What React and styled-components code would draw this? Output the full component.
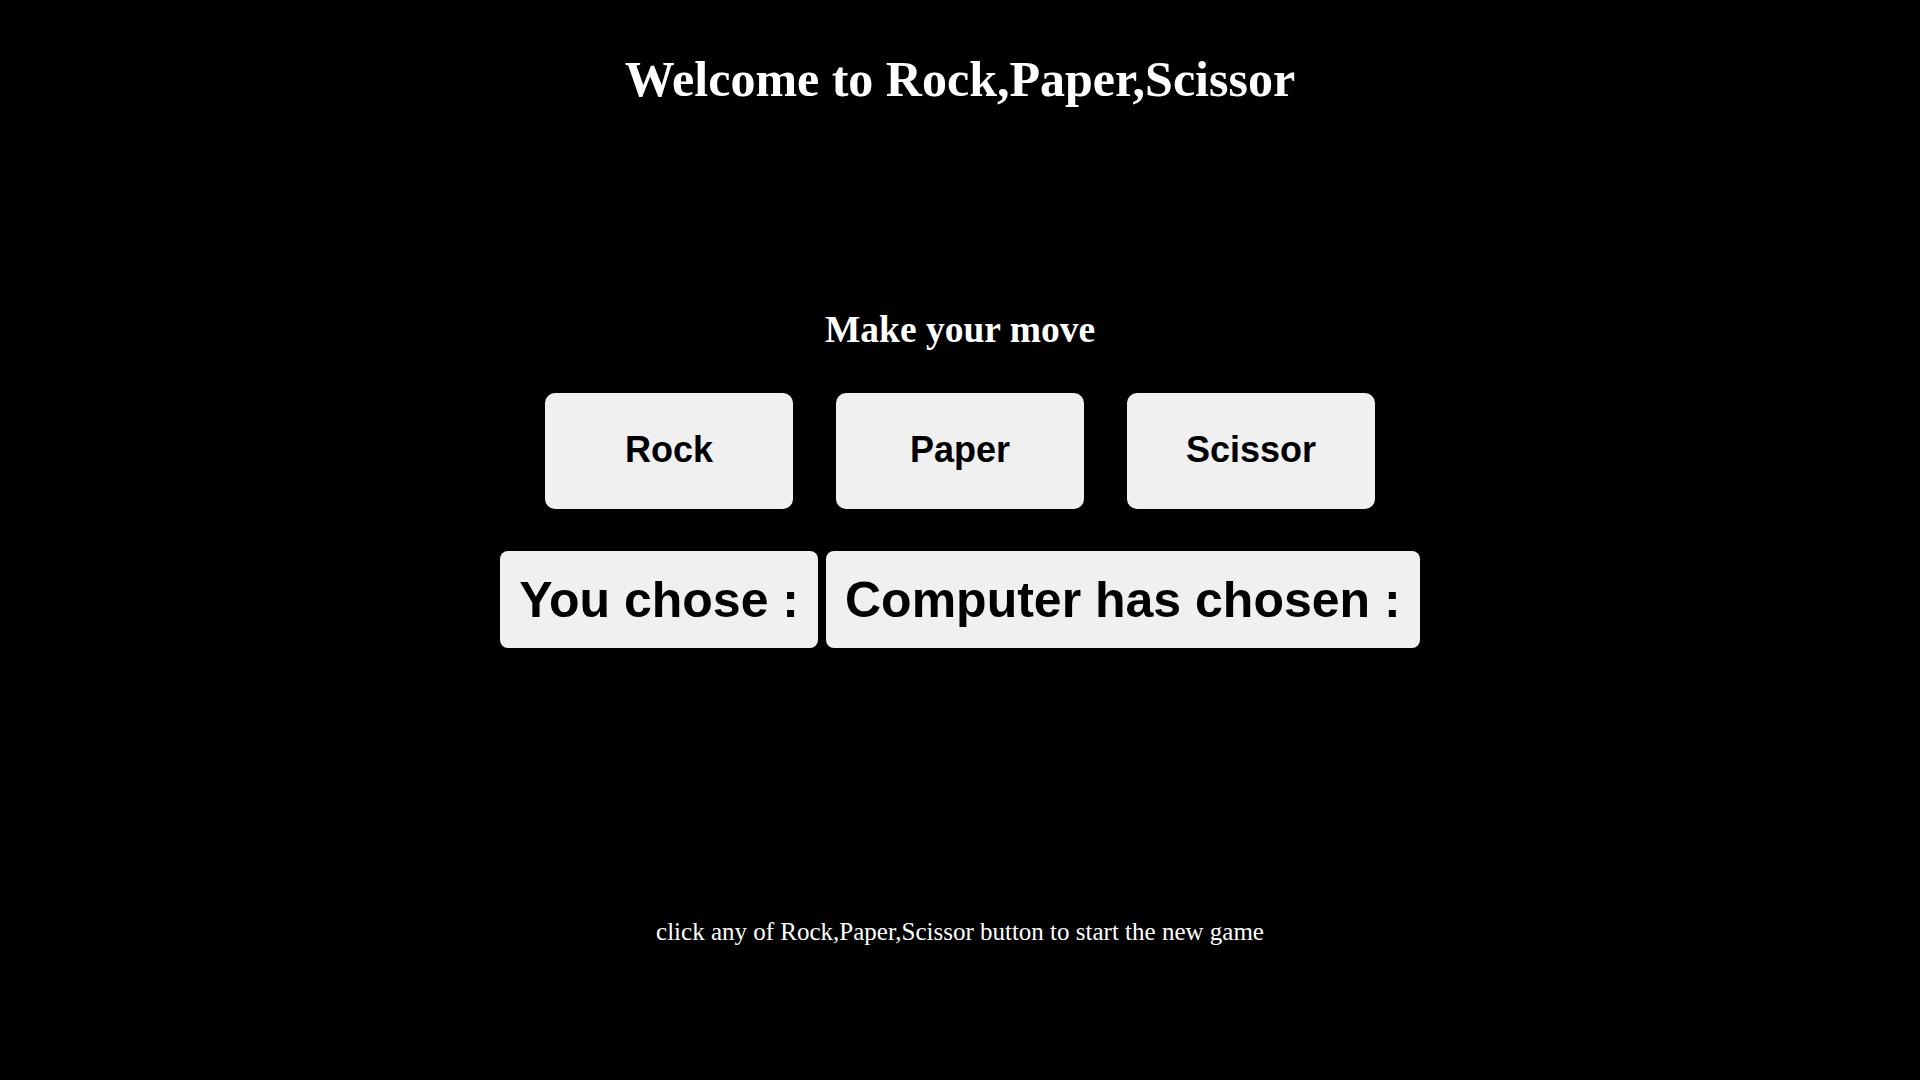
import React, {useState} from 'react';
import styled, {createGlobalStyle} from 'styled-components';

const GlobalStyle = createGlobalStyle`
  html, body {
    margin: 0;
    padding: 0;
    background: #000;
  }
`;

const Page = styled.main`
  min-height: 100vh;
  display: flex;
  flex-direction: column;
  align-items: center;
  background: #000;
  color: #fff;
  font-family: "Liberation Serif", "Times New Roman", serif;
`;

const Title = styled.h1`
  margin: 50px 0 0;
  font-size: 50px;
  font-weight: 700;
  line-height: normal;
`;

const Prompt = styled.h2`
  margin: 200px 0 0;
  font-size: 37.5px;
  font-weight: 700;
  line-height: normal;
`;

const Choices = styled.div`
  display: flex;
  gap: 43px;
  margin-top: 42px;
`;

const ChoiceButton = styled.button`
  width: 248px;
  height: 116px;
  padding: 0 0 2px;
  border: none;
  border-radius: 10px;
  background: #f0f0f0;
  color: #000;
  font-family: "Liberation Sans", Arial, sans-serif;
  font-size: 36px;
  font-weight: 700;
  cursor: pointer;
`;

const Results = styled.div`
  display: flex;
  gap: 8px;
  margin-top: 42px;
`;

const ResultBox = styled.div`
  height: 97px;
  display: flex;
  align-items: center;
  padding: 0 19px;
  border-radius: 8px;
  background: #f0f0f0;
  color: #000;
  font-family: "Liberation Sans", Arial, sans-serif;
  font-size: 50px;
  font-weight: 700;
  white-space: nowrap;
`;

const Hint = styled.p`
  margin: 270px 0 0;
  font-size: 25px;
  line-height: normal;
`;

const moves = ['Rock', 'Paper', 'Scissor'];

export default function App() {
    const [you, setYou] = useState('');
    const [computer, setComputer] = useState('');

    const play = (move) => {
        setYou(move);
        setComputer(moves[Math.floor(Math.random() * moves.length)]);
    };

    return (
        <Page>
            <GlobalStyle />
            <Title>Welcome to Rock,Paper,Scissor</Title>
            <Prompt>Make your move</Prompt>
            <Choices>
                {moves.map((move) => (
                    <ChoiceButton key={move} onClick={() => play(move)}>
                        {move}
                    </ChoiceButton>
                ))}
            </Choices>
            <Results>
                <ResultBox>{`You chose :${you ? ' ' + you : ''}`}</ResultBox>
                <ResultBox>{`Computer has chosen :${computer ? ' ' + computer : ''}`}</ResultBox>
            </Results>
            <Hint>click any of Rock,Paper,Scissor button to start the new game</Hint>
        </Page>
    );
}
